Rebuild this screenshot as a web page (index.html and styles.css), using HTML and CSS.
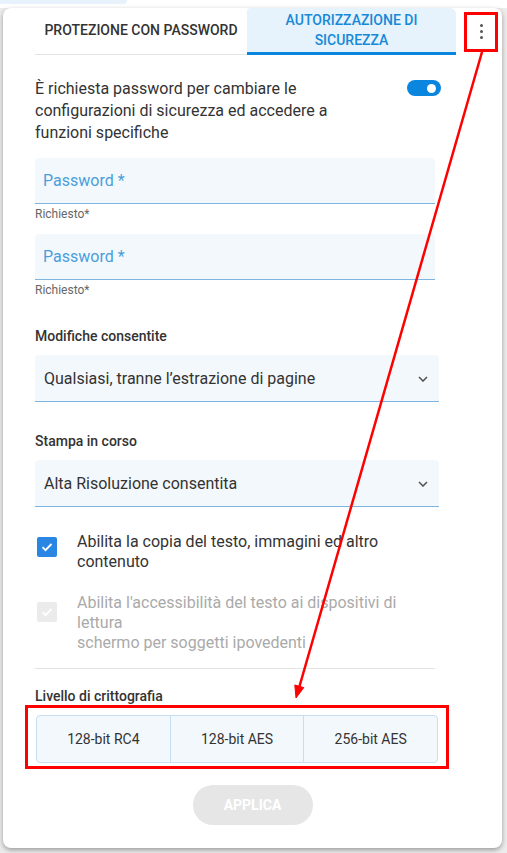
FILE: index.html
```html
<!DOCTYPE html>
<html>
<head>
  <meta charset="UTF-8" />
  <meta name="viewport" content="width=device-width, initial-scale=1.0" />
  <title>Autorizzazione di sicurezza</title>
  <link rel="stylesheet" href="styles.css">
</head>
<body>
  <div class="topbar"><div class="topbar-pill"></div></div>

  <div class="panel">
    <!-- Tabs -->
    <div class="tabs">
      <div class="tab">Protezione con password</div>
      <div class="tab active">Autorizzazione di<br>sicurezza</div>
      <div class="tab-menu">
        <span class="dot"></span>
        <span class="dot"></span>
        <span class="dot"></span>
      </div>
    </div>

    <div class="content">
      <div class="require-row">
        <p class="require-text">È richiesta password per cambiare le configurazioni di sicurezza ed accedere a funzioni specifiche</p>
        <div class="toggle"><span class="knob"></span></div>
      </div>

      <div class="field">
        <div class="field-input">Password *</div>
        <div class="field-help">Richiesto*</div>
      </div>
      <div class="field">
        <div class="field-input">Password *</div>
        <div class="field-help">Richiesto*</div>
      </div>

      <div class="section-label">Modifiche consentite</div>
      <div class="select">
        <span>Qualsiasi, tranne l’estrazione di pagine</span>
        <svg class="chevron" width="10" height="6" viewBox="0 0 10 6"><path d="M1 1l4 4 4-4" fill="none" stroke="#555" stroke-width="1.6"/></svg>
      </div>

      <div class="section-label">Stampa in corso</div>
      <div class="select">
        <span>Alta Risoluzione consentita</span>
        <svg class="chevron" width="10" height="6" viewBox="0 0 10 6"><path d="M1 1l4 4 4-4" fill="none" stroke="#555" stroke-width="1.6"/></svg>
      </div>

      <div class="check-row">
        <div class="check-box">
          <svg width="14" height="14" viewBox="0 0 14 14"><path d="M2.5 7.2l3 3 6-6.2" fill="none" stroke="#fff" stroke-width="1.8"/></svg>
        </div>
        <div class="check-text">Abilita la copia del testo, immagini ed altro contenuto</div>
      </div>
      <div class="check-row disabled">
        <div class="check-box">
          <svg width="14" height="14" viewBox="0 0 14 14"><path d="M2.5 7.2l3 3 6-6.2" fill="none" stroke="#fff" stroke-width="1.8"/></svg>
        </div>
        <div class="check-text">Abilita l'accessibilità del testo ai dispositivi di lettura<br>schermo per soggetti ipovedenti</div>
      </div>

      <div class="divider"></div>

      <div class="section-label small-gap">Livello di crittografia</div>
      <div class="segmented">
        <div class="segment">128-bit RC4</div>
        <div class="segment">128-bit AES</div>
        <div class="segment">256-bit AES</div>
      </div>
    </div>

    <div class="actions">
      <button class="btn-apply">Applica</button>
    </div>
  </div>

  <!-- annotation overlay -->
  <svg class="annotations" width="507" height="853" viewBox="0 0 507 853">
    <rect x="465.5" y="13.5" width="31" height="37" fill="none" stroke="#f00" stroke-width="3"/>
    <rect x="26.5" y="706.5" width="421" height="61" fill="none" stroke="#f00" stroke-width="3"/>
    <line x1="482" y1="52" x2="299" y2="688" stroke="#f00" stroke-width="2.5"/>
    <polygon points="296,698 303.8,687.6 294.8,685" fill="#f00" stroke="#f00" stroke-width="1"/>
  </svg>
</body>
</html>
```

FILE: styles.css
```css
* {
  margin: 0;
  padding: 0;
  box-sizing: border-box;
}

body {
  font-family: Roboto, 'Liberation Sans', sans-serif;
  background: #ececec;
  color: #333;
  width: 507px;
  height: 853px;
  overflow: hidden;
  position: relative;
}

.topbar {
  height: 8px;
  background: #fff;
}

.topbar-pill {
  width: 127px;
  height: 4px;
  background: #e8f2fc;
  border-radius: 0 0 8px 0;
}

.panel {
  margin-left: 3px;
  width: 499px;
  height: 840px;
  background: #fff;
  border-radius: 8px;
  box-shadow: 0 2px 5px rgba(0,0,0,0.35);
}

/* Tabs */
.tabs {
  display: flex;
  height: 47px;
  padding-left: 32px;
}

.tab {
  width: 212px;
  display: flex;
  align-items: center;
  justify-content: center;
  text-align: center;
  text-transform: uppercase;
  font-size: 14px;
  font-weight: 500;
  line-height: 20px;
  color: #333;
  border-bottom: 1px solid #e2e2e2;
  padding-bottom: 3px;
}

.tab.active {
  width: 209px;
  background: #e6f2fc;
  color: #1789d8;
  border-bottom: 3px solid #0a86de;
  border-radius: 4px 6px 0 0;
  padding-bottom: 0;
}

.tab-menu {
  flex: 1;
  display: flex;
  flex-direction: column;
  align-items: center;
  justify-content: center;
  gap: 3px;
  padding-left: 4px;
}

.dot {
  width: 3px;
  height: 3px;
  border-radius: 50%;
  background: #555;
}

/* Form */
.content {
  padding: 23px 63px 0 32px;
}

.require-row {
  display: flex;
  align-items: flex-start;
}

.require-text {
  width: 340px;
  font-size: 16px;
  line-height: 22px;
}

.toggle {
  margin: 2px -2px 0 auto;
  width: 34px;
  height: 16px;
  border-radius: 8px;
  background: #0a86de;
  display: flex;
  align-items: center;
  justify-content: flex-end;
  padding: 0 5px;
}

.knob {
  width: 9px;
  height: 9px;
  border-radius: 50%;
  background: #fff;
}

.field {
  margin-top: 14px;
  width: 400px;
}

.field + .field {
  margin-top: 13px;
}

.field-input {
  height: 46px;
  background: #f3f8fc;
  border-bottom: 1px solid #7db5e0;
  border-radius: 4px 4px 0 0;
  padding: 0 8px;
  display: flex;
  align-items: center;
  font-size: 16px;
  color: #4a9edb;
}

.field-help {
  margin-top: 3px;
  font-size: 12px;
  line-height: 14px;
  color: #666;
}

.section-label {
  margin-top: 29px;
  margin-bottom: 9px;
  font-size: 14px;
  font-weight: 500;
  line-height: 20px;
}

.section-label.small-gap {
  margin-top: 17px;
}

.select {
  height: 47px;
  background: #f3f8fc;
  border-bottom: 1px solid #7db5e0;
  border-radius: 4px 4px 0 0;
  display: flex;
  align-items: center;
  justify-content: space-between;
  padding: 0 11px 0 9px;
  font-size: 16px;
}

.chevron {
  margin-top: 1px;
}

.check-row {
  display: flex;
  align-items: flex-start;
  margin-top: 25px;
  font-size: 16px;
  line-height: 20px;
}

.check-row + .check-row {
  margin-top: 21px;
}

.check-box {
  width: 20px;
  height: 20px;
  margin: 5px 0 0 2px;
  border-radius: 2px;
  background: #2a86e3;
  display: flex;
  align-items: center;
  justify-content: center;
  flex-shrink: 0;
}

.check-text {
  flex: 1;
  margin-left: 20px;
}

.check-row.disabled .check-box {
  background: #ebebeb;
  margin-top: 9px;
}

.check-row.disabled .check-text {
  color: #aaa;
}

.divider {
  margin-top: 15px;
  width: 400px;
  height: 1px;
  background: #e3e3e3;
}

.segmented {
  display: flex;
  width: 402px;
  height: 48px;
  margin-left: 1px;
  background: #f3f8fc;
  border: 1px solid #c6dff3;
  border-radius: 4px;
}

.segment {
  flex: 1;
  display: flex;
  align-items: center;
  justify-content: center;
  font-size: 14px;
  color: #333;
}

.segment + .segment {
  border-left: 1px solid #c6dff3;
}

.actions {
  display: flex;
  justify-content: center;
  margin-top: 22px;
}

.btn-apply {
  width: 120px;
  height: 40px;
  border: none;
  border-radius: 20px;
  background: #e6e6e6;
  color: #fff;
  font-family: inherit;
  font-size: 14px;
  font-weight: 700;
  text-transform: uppercase;
}

.annotations {
  position: absolute;
  top: 0;
  left: 0;
  pointer-events: none;
}
```
